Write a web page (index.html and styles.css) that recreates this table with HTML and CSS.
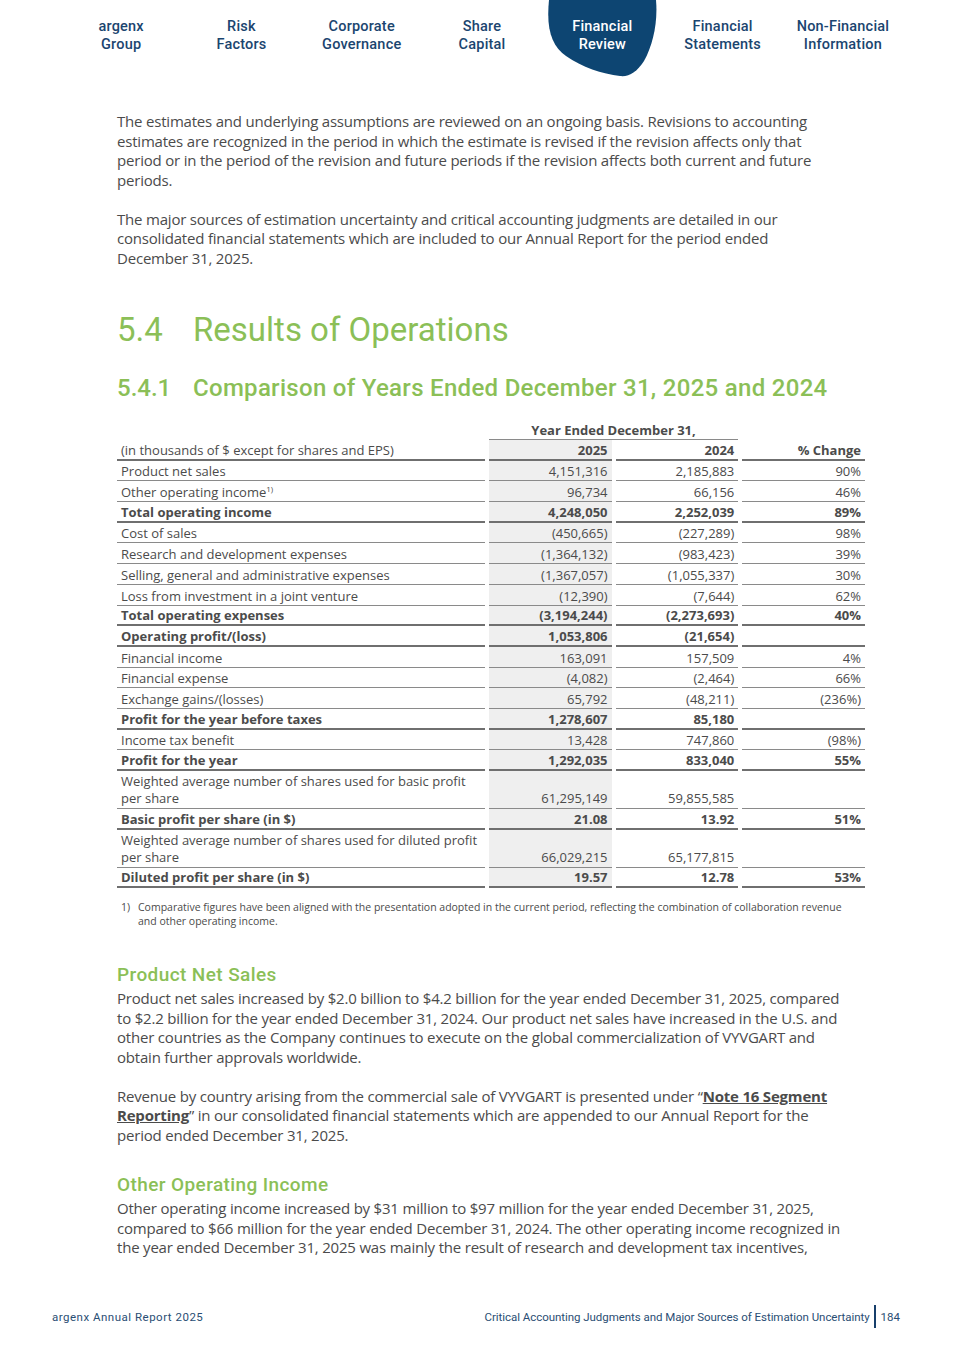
FILE: index.html
```html
<!DOCTYPE html>
<html lang="en">
<head>
<meta charset="utf-8">
<title>argenx Annual Report 2025 - Results of Operations</title>
<link rel="stylesheet" href="styles.css">
</head>
<body>
<header class="topnav">
  <svg class="blob" viewBox="0 0 110 80" width="110" height="80" aria-hidden="true">
    <path d="M2,0 L109,0 C111,22 106,45 97,61 C90,72 82,77 73,76 C55,74 35,67 19,56 C5,46 -1,30 2,0 Z" fill="#0d4572"/>
  </svg>
  <nav class="navlist">
    <a class="navitem">argenx<br>Group</a>
    <a class="navitem">Risk<br>Factors</a>
    <a class="navitem">Corporate<br>Governance</a>
    <a class="navitem">Share<br>Capital</a>
    <a class="navitem active">Financial<br>Review</a>
    <a class="navitem">Financial<br>Statements</a>
    <a class="navitem">Non-Financial<br>Information</a>
  </nav>
</header>

<main class="content">
  <p class="para">The estimates and underlying assumptions are reviewed on an ongoing basis. Revisions to accounting estimates are recognized in the period in which the estimate is revised if the revision affects only that period or in the period of the revision and future periods if the revision affects both current and future periods.</p>
  <p class="para">The major sources of estimation uncertainty and critical accounting judgments are detailed in our consolidated financial statements which are included to our Annual Report for the period ended December 31, 2025.</p>

  <h2 class="h2"><span class="num">5.4</span>Results of Operations</h2>
  <h3 class="h3"><span class="num">5.4.1</span>Comparison of Years Ended December 31, 2025 and 2024</h3>

  <table class="fin">
    <colgroup>
      <col class="c-label"><col class="c-num"><col class="c-num"><col class="c-num">
    </colgroup>
    <thead>
      <tr class="yr">
        <th></th><th colspan="2" class="yrhead">Year Ended December 31,</th><th></th>
      </tr>
      <tr class="hdr">
        <th class="lbl">(in thousands of $ except for shares and EPS)</th>
        <th class="sh">2025</th><th>2024</th><th>% Change</th>
      </tr>
    </thead>
    <tbody>
      <tr><td class="lbl">Product net sales</td><td class="sh">4,151,316</td><td>2,185,883</td><td>90%</td></tr>
      <tr><td class="lbl">Other operating income<sup>1)</sup></td><td class="sh">96,734</td><td>66,156</td><td>46%</td></tr>
      <tr class="b"><td class="lbl">Total operating income</td><td class="sh">4,248,050</td><td>2,252,039</td><td>89%</td></tr>
      <tr><td class="lbl">Cost of sales</td><td class="sh">(450,665)</td><td>(227,289)</td><td>98%</td></tr>
      <tr><td class="lbl">Research and development expenses</td><td class="sh">(1,364,132)</td><td>(983,423)</td><td>39%</td></tr>
      <tr><td class="lbl">Selling, general and administrative expenses</td><td class="sh">(1,367,057)</td><td>(1,055,337)</td><td>30%</td></tr>
      <tr><td class="lbl">Loss from investment in a joint venture</td><td class="sh">(12,390)</td><td>(7,644)</td><td>62%</td></tr>
      <tr class="b"><td class="lbl">Total operating expenses</td><td class="sh">(3,194,244)</td><td>(2,273,693)</td><td>40%</td></tr>
      <tr class="b"><td class="lbl">Operating profit/(loss)</td><td class="sh">1,053,806</td><td>(21,654)</td><td></td></tr>
      <tr><td class="lbl">Financial income</td><td class="sh">163,091</td><td>157,509</td><td>4%</td></tr>
      <tr><td class="lbl">Financial expense</td><td class="sh">(4,082)</td><td>(2,464)</td><td>66%</td></tr>
      <tr><td class="lbl">Exchange gains/(losses)</td><td class="sh">65,792</td><td>(48,211)</td><td>(236%)</td></tr>
      <tr class="b"><td class="lbl">Profit for the year before taxes</td><td class="sh">1,278,607</td><td>85,180</td><td></td></tr>
      <tr><td class="lbl">Income tax benefit</td><td class="sh">13,428</td><td>747,860</td><td>(98%)</td></tr>
      <tr class="b"><td class="lbl">Profit for the year</td><td class="sh">1,292,035</td><td>833,040</td><td>55%</td></tr>
      <tr class="two"><td class="lbl">Weighted average number of shares used for basic profit per share</td><td class="sh">61,295,149</td><td>59,855,585</td><td></td></tr>
      <tr class="b"><td class="lbl">Basic profit per share (in $)</td><td class="sh">21.08</td><td>13.92</td><td>51%</td></tr>
      <tr class="two"><td class="lbl">Weighted average number of shares used for diluted profit per share</td><td class="sh">66,029,215</td><td>65,177,815</td><td></td></tr>
      <tr class="b"><td class="lbl">Diluted profit per share (in $)</td><td class="sh">19.57</td><td>12.78</td><td>53%</td></tr>
    </tbody>
  </table>

  <div class="footnote">
    <span class="fn-num">1)</span>
    <span class="fn-text">Comparative figures have been aligned with the presentation adopted in the current period, reflecting the combination of collaboration revenue and other operating income.</span>
  </div>

  <h4 class="h4">Product Net Sales</h4>
  <p class="para">Product net sales increased by $2.0 billion to $4.2 billion for the year ended December 31, 2025, compared to $2.2 billion for the year ended December 31, 2024. Our product net sales have increased in the U.S. and other countries as the Company continues to execute on the global commercialization of VYVGART and obtain further approvals worldwide.</p>
  <p class="para">Revenue by country arising from the commercial sale of VYVGART is presented under “<a class="link">Note 16 Segment Reporting</a>” in our consolidated financial statements which are appended to our Annual Report for the period ended December 31, 2025.</p>

  <h4 class="h4 h4b">Other Operating Income</h4>
  <p class="para">Other operating income increased by $31 million to $97 million for the year ended December 31, 2025, compared to $66 million for the year ended December 31, 2024. The other operating income recognized in the year ended December 31, 2025 was mainly the result of research and development tax incentives,</p>
</main>

<footer class="foot">
  <span class="foot-left">argenx Annual Report 2025</span>
  <span class="foot-right">
    <span class="foot-title">Critical Accounting Judgments and Major Sources of Estimation Uncertainty</span>
    <span class="foot-bar"></span>
    <span class="foot-page">184</span>
  </span>
</footer>
</body>
</html>
```

FILE: styles.css
```css
* { box-sizing: border-box; }
html, body { margin: 0; padding: 0; }
body {
  width: 964px;
  height: 1365px;
  background: #ffffff;
  font-family: "Open Sans", "Liberation Sans", sans-serif;
  color: #4b4b4b;
  position: relative;
  overflow: hidden;
}

/* ---------- top navigation ---------- */
.topnav {
  position: relative;
  height: 86px;
}
.blob {
  position: absolute;
  left: 547px;
  top: 0;
}
.navlist {
  position: relative;
  display: flex;
  padding: 18px 0 0 61px;
}
.navitem {
  width: 120.3px;
  text-align: center;
  font-family: "Roboto", "Noto Sans", sans-serif;
  font-weight: 500;
  font-size: 14.5px;
  line-height: 18px;
  color: #1b456f;
  letter-spacing: 0.2px;
}
.navitem.active { color: #ffffff; }

/* ---------- content ---------- */
.content {
  padding: 26px 122.5px 0 117px;
}
.para {
  margin: 0 0 19.5px 0;
  font-size: 15px;
  line-height: 19.5px;
  letter-spacing: -0.2px;
  color: #4b4b4b;
}
.h2 {
  margin: 42px 0 0 0;
  font-family: "Roboto", "Noto Sans", sans-serif;
  font-weight: 400;
  font-size: 33px;
  line-height: 40px;
  color: #8bbf57;
}
.h2 .num { display: inline-block; width: 76px; }
.h3 {
  margin: 24px 0 0 0;
  font-family: "Roboto", "Noto Sans", sans-serif;
  font-weight: 500;
  font-size: 24px;
  line-height: 28px;
  letter-spacing: 0.3px;
  white-space: nowrap;
  color: #8bbf57;
}
.h3 .num { display: inline-block; width: 76px; letter-spacing: 0; }

/* ---------- table ---------- */
.fin {
  margin: 19px 0 0 -4px;
  width: 756px;
  border-collapse: separate;
  border-spacing: 4px 0;
  font-size: 13px;
  color: #4b4b4b;
}
.c-label { width: 369px; }
.c-num { width: 123px; }
.fin th, .fin td {
  padding: 0 4px;
  height: 20.7px;
  line-height: 17px;
  text-align: right;
  vertical-align: bottom;
  font-weight: 400;
  border-bottom: 1px solid #8a8a8a;
}
.fin .lbl { text-align: left; }
.fin tr.yr th {
  border-bottom: none;
  height: 19px;
}
.fin tr.yr th.yrhead {
  text-align: center;
  font-weight: 700;
  border-bottom: 1px solid #8a8a8a;
}
.fin tr.hdr th { font-weight: 400; border-bottom: 2px solid #6f6f6f; }
.fin tr.hdr th.sh, .fin tr.hdr th:nth-child(3), .fin tr.hdr th:nth-child(4) { font-weight: 700; }
.fin .sh { background: #efefef; }
.fin tr.b td { font-weight: 700; border-bottom: 2px solid #6f6f6f; }
.fin tr.two td { padding-top: 2px; padding-bottom: 1px; }
.fin sup { font-size: 8px; line-height: 0; vertical-align: 5px; }

/* ---------- footnote ---------- */
.footnote {
  display: flex;
  margin: 12px 0 0 4px;
  font-size: 10.5px;
  line-height: 14px;
  color: #4b4b4b;
}
.fn-num { width: 17px; flex: none; }
.fn-text { width: 714px; flex: none; }

/* ---------- sub heading ---------- */
.h4 {
  margin: 35px 0 2px 0;
  font-family: "Roboto", "Noto Sans", sans-serif;
  font-weight: 500;
  font-size: 19px;
  line-height: 24px;
  letter-spacing: 0.4px;
  color: #8bbf57;
}
.h4b { margin-top: 28px; }
.link {
  color: #4b4b4b;
  font-weight: 700;
  text-decoration: underline;
}

/* ---------- footer ---------- */
.foot {
  position: absolute;
  left: 52px;
  right: 64px;
  top: 1305px;
  height: 23px;
  display: flex;
  justify-content: space-between;
  align-items: center;
  font-family: "Roboto", "Noto Sans", sans-serif;
  font-size: 11.5px;
  color: #2a4e74;
}
.foot-left { letter-spacing: 0.5px; }
.foot-title { letter-spacing: -0.05px; }
.foot-right { display: flex; align-items: center; height: 23px; }
.foot-bar {
  display: inline-block;
  width: 2px;
  height: 23px;
  background: #173f6b;
  margin: 0 5px 0 4px;
}
```
